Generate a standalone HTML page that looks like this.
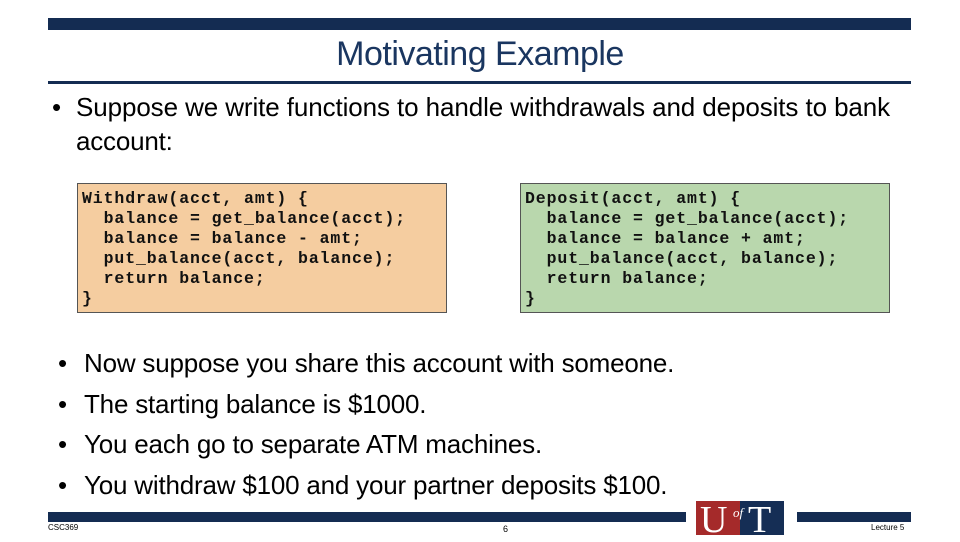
<!DOCTYPE html>
<html><head><meta charset="utf-8"><style>
body{margin:0;width:960px;height:540px;position:relative;background:#fff;overflow:hidden;font-family:"Liberation Sans",sans-serif;}
.a{position:absolute;}
.t{white-space:nowrap;color:#000;font-size:26px;letter-spacing:-0.2px;}
.code{position:absolute;border:1px solid #555;box-sizing:border-box;font-family:"Liberation Mono",monospace;font-weight:bold;font-size:16.5px;letter-spacing:0.9px;line-height:20px;white-space:pre;padding:5px 0 0 4px;color:#111;}
</style></head><body>
<div class="a" style="left:48px;top:18px;width:863px;height:12px;background:#142c52"></div>
<div class="a" style="left:0;width:960px;top:35px;text-align:center;font-size:34px;color:#1a3660;letter-spacing:-0.5px">Motivating Example</div>
<div class="a" style="left:48px;top:81px;width:863px;height:3px;background:#142c52"></div>
<div class="a t" style="left:52px;top:92px">•</div>
<div class="a t" style="left:76px;top:92px;letter-spacing:-0.1px">Suppose we write functions to handle withdrawals and deposits to bank</div>
<div class="a t" style="left:76px;top:126px">account:</div>
<div class="code" style="left:77px;top:183px;width:370px;height:130px;background:#f5cda0">Withdraw(acct, amt) {
  balance = get_balance(acct);
  balance = balance - amt;
  put_balance(acct, balance);
  return balance;
}</div>
<div class="code" style="left:520px;top:183px;width:370px;height:130px;background:#b9d7ad">Deposit(acct, amt) {
  balance = get_balance(acct);
  balance = balance + amt;
  put_balance(acct, balance);
  return balance;
}</div>
<div class="a t" style="left:58px;top:348px">•</div><div class="a t" style="left:84px;top:348px">Now suppose you share this account with someone.</div>
<div class="a t" style="left:58px;top:389px">•</div><div class="a t" style="left:84px;top:389px">The starting balance is $1000.</div>
<div class="a t" style="left:58px;top:429px">•</div><div class="a t" style="left:84px;top:429px">You each go to separate ATM machines.</div>
<div class="a t" style="left:58px;top:470px">•</div><div class="a t" style="left:84px;top:470px">You withdraw $100 and your partner deposits $100.</div>
<div class="a" style="left:48px;top:512px;width:638px;height:10px;background:#142c52"></div>
<div class="a" style="left:797px;top:512px;width:114px;height:10px;background:#142c52"></div>
<div class="a" style="left:696px;top:501px;width:44px;height:34px;background:#a52a2a"></div>
<div class="a" style="left:740px;top:501px;width:44px;height:34px;background:#152e55"></div>
<div class="a" style="left:700px;top:498px;font-family:'Liberation Serif',serif;font-size:38px;color:#fff">U</div>
<div class="a" style="left:733px;top:505px;font-family:'Liberation Serif',serif;font-style:italic;font-size:13px;color:#fff">of</div>
<div class="a" style="left:748px;top:498px;font-family:'Liberation Serif',serif;font-size:38px;color:#fff">T</div>
<div class="a" style="left:48px;top:523px;font-size:8px">CSC369</div>
<div class="a" style="left:503px;top:524px;font-size:9px">6</div>
<div class="a" style="left:871px;top:523px;font-size:8px">Lecture 5</div>
</body></html>
